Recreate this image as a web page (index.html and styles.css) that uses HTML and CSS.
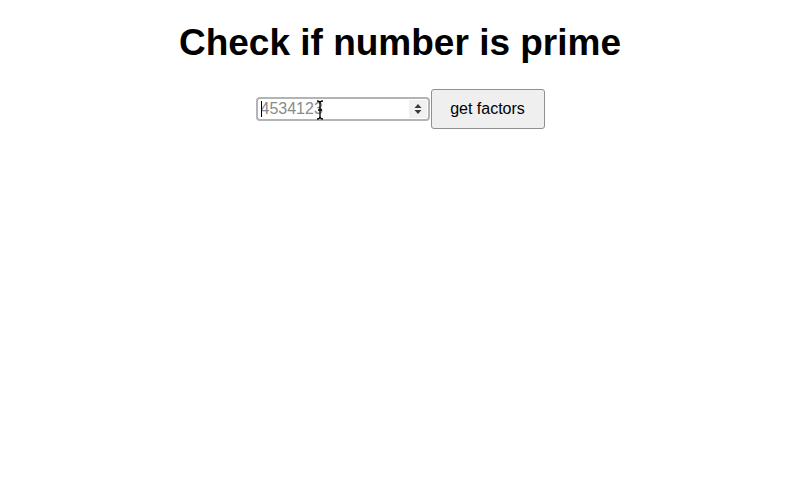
FILE: index.html
```html
<!DOCTYPE html>
<html>
<head>
<meta charset="utf-8">
<link rel="stylesheet" href="styles.css">
</head>
<body>
<h1 class="title">Check if number is prime</h1>
<div class="row">
  <div class="field">
    <span class="caret"></span>
    <input class="num" type="text" placeholder="4534123">
    <span class="spinbox"><svg width="8" height="12" viewBox="0 0 8 12"><path d="M4 1 L7.5 5 H0.5 Z M4 11 L7.5 7 H0.5 Z" fill="#3a3a3a"/></svg></span>
    <svg class="ibeam" width="8" height="20" viewBox="0 0 8 20"><path d="M1 1 Q4 1 4 3.5 V16.5 Q4 19 1 19 M7 1 Q4 1 4 3.5 M4 16.5 Q4 19 7 19 M2 10 H6" stroke="#000" stroke-width="1.3" fill="none"/></svg>
  </div>
  <button class="btn">get factors</button>
</div>
</body>
</html>
```
FILE: styles.css
```css
body {
  margin: 0;
  font-family: "Liberation Sans", Arial, sans-serif;
  background: #fff;
}
.title {
  margin: 22px 0 0;
  text-align: center;
  font-size: 37px;
  font-weight: bold;
  line-height: 42px;
}
.row {
  margin-top: 25px;
  display: flex;
  justify-content: center;
  align-items: center;
}
.field {
  position: relative;
  width: 170px;
  height: 20px;
  border: 2px solid #b4b4b4;
  border-radius: 4px;
  display: flex;
  align-items: center;
  background: #fff;
}
.num {
  border: none;
  outline: none;
  padding: 0 0 0 3px;
  width: 140px;
  font-family: "Liberation Sans", Arial, sans-serif;
  font-size: 16px;
  background: transparent;
}
.num::placeholder {
  color: #8a8a8a;
}
.caret {
  position: absolute;
  left: 3px;
  top: 2px;
  width: 1px;
  height: 16px;
  background: #000;
}
.spinbox {
  margin-left: auto;
  margin-right: 1px;
  width: 18px;
  height: 18px;
  background: #f1f1f1;
  display: flex;
  align-items: center;
  justify-content: center;
}
.spinbox svg {
  display: block;
}
.ibeam {
  position: absolute;
  left: 58px;
  top: 1px;
}
.btn {
  margin-left: 1px;
  width: 114px;
  height: 40px;
  background: #efefef;
  border: 1px solid #8f8f8f;
  border-radius: 3px;
  font-family: "Liberation Sans", Arial, sans-serif;
  font-size: 16px;
  color: #000;
  padding: 0;
}
```
